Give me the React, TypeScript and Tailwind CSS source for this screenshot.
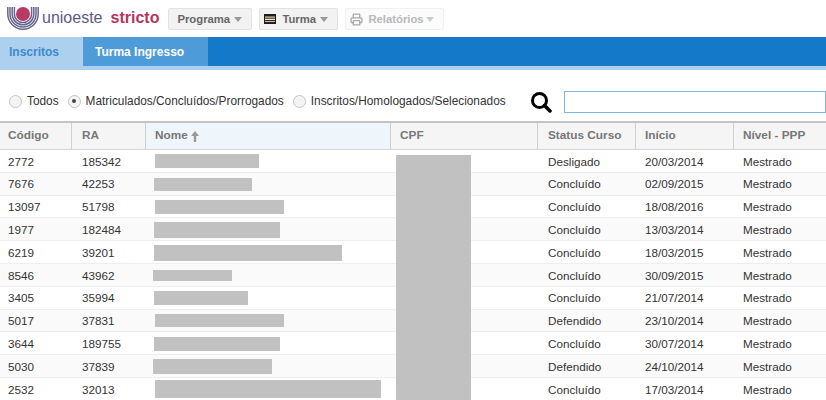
import React from 'react';
import { Printer } from 'lucide-react';

type Row = { codigo: string; ra: string; bar: string; status: string; inicio: string };

const rows: Row[] = [
  { codigo: '2772', ra: '185342', bar: 'ml-[10px] w-[104px] h-[14px]', status: 'Desligado', inicio: '20/03/2014' },
  { codigo: '7676', ra: '42253', bar: 'ml-[9px] w-[98px] h-[13px]', status: 'Concluído', inicio: '02/09/2015' },
  { codigo: '13097', ra: '51798', bar: 'ml-[10px] w-[129px] h-[14px]', status: 'Concluído', inicio: '18/08/2016' },
  { codigo: '1977', ra: '182484', bar: 'ml-[9px] w-[126px] h-[16px]', status: 'Concluído', inicio: '13/03/2014' },
  { codigo: '6219', ra: '39201', bar: 'ml-[9px] w-[188px] h-[16px]', status: 'Concluído', inicio: '18/03/2015' },
  { codigo: '8546', ra: '43962', bar: 'ml-[8px] w-[79px] h-[11px]', status: 'Concluído', inicio: '30/09/2015' },
  { codigo: '3405', ra: '35994', bar: 'ml-[9px] w-[94px] h-[14px]', status: 'Concluído', inicio: '21/07/2014' },
  { codigo: '5017', ra: '37831', bar: 'ml-[10px] w-[129px] h-[13px]', status: 'Defendido', inicio: '23/10/2014' },
  { codigo: '3644', ra: '189755', bar: 'ml-[9px] w-[126px] h-[14px]', status: 'Concluído', inicio: '30/07/2014' },
  { codigo: '5030', ra: '37839', bar: 'ml-[8px] w-[119px] h-[15px]', status: 'Defendido', inicio: '24/10/2014' },
  { codigo: '2532', ra: '32013', bar: 'ml-[10px] w-[226px] h-[18px]', status: 'Concluído', inicio: '17/03/2014' },
];

const cols = 'grid grid-cols-[72px_74px_245px_147px_98px_98px_92px]';

const Logo = () => (
  <svg width="32" height="24" viewBox="0 0 32 24" className="shrink-0">
    <g fill="none" stroke="#68658c" strokeWidth="1.5">
      <path d="M0.800 0V7A15.200 15.200 0 0 0 31.200 7V0" />
      <path d="M3 0V7A13 13 0 0 0 29 7V0" />
      <path d="M5.200 0V7A10.800 10.800 0 0 0 26.800 7V0" />
      <path d="M7.400 0V7A8.600 8.600 0 0 0 24.600 7V0" />
    </g>
    <circle cx="16" cy="7" r="7" fill="#b93a63" />
  </svg>
);

const MenuButton = ({ children, width, disabled }: { children: React.ReactNode; width: string; disabled?: boolean }) => (
  <div
    className={`flex h-[22px] items-center rounded-[2px] border text-[11.3px] font-bold ${width} ${
      disabled ? 'border-[#f0f0f0] bg-[#fbfbfb] text-[#b8b8b8]' : 'border-[#e2e2e2] bg-[#f2f2f2] text-[#666666]'
    }`}
  >
    {children}
    <span
      className={`ml-auto mr-[9px] h-0 w-0 border-x-[4px] border-t-[5px] border-x-transparent ${
        disabled ? 'border-t-[#cccccc]' : 'border-t-[#999999]'
      }`}
    />
  </div>
);

const TurmaIcon = () => (
  <svg width="12" height="10" viewBox="0 0 12 10" className="shrink-0">
    <rect width="12" height="10" fill="#1c1c1c" />
    <rect x="1" y="2.500" width="10" height="1.200" fill="#e9d9a0" />
    <rect x="1" y="4.700" width="10" height="1.200" fill="#ffffff" />
    <rect x="1" y="6.900" width="10" height="1.200" fill="#e8a9a0" />
  </svg>
);

const Radio = ({ label, checked }: { label: string; checked?: boolean }) => (
  <div className="flex items-center gap-[5px]">
    <span className="flex h-[13px] w-[13px] items-center justify-center rounded-full border border-[#c4c4c4] bg-[#f4f4f4]">
      {checked && <span className="h-[4px] w-[4px] rounded-full bg-[#444444]" />}
    </span>
    <span>{label}</span>
  </div>
);

const Head = ({ children, active }: { children: React.ReactNode; active?: boolean }) => (
  <div className={`flex items-center border-r border-[#cfcfcf] pl-[8px] last:border-r-0 ${active ? 'bg-[#eef5fb]' : ''}`}>
    {children}
  </div>
);

export default function App() {
  return (
    <div className="h-[400px] w-[826px] overflow-hidden bg-white font-['Liberation_Sans',Arial,sans-serif] text-[11.7px] text-[#333333]">
      <div className="flex h-[37px] items-start pl-[7px] pt-[8px]">
        <div className="-mt-[1px]">
          <Logo />
        </div>
        <span className="ml-[3px] text-[16px] leading-[20px] text-[#5c5a82]">unioeste</span>
        <span className="ml-[8px] text-[16px] font-bold leading-[20px] text-[#b3355f]">stricto</span>
        <div className="ml-[9px] flex gap-[7px]">
          <MenuButton width="w-[84px]">
            <span className="ml-[8px]">Programa</span>
          </MenuButton>
          <MenuButton width="w-[79px]">
            <span className="ml-[4px] mr-[6px] flex">
              <TurmaIcon />
            </span>
            Turma
          </MenuButton>
          <MenuButton width="w-[99px]" disabled>
            <Printer size={13} strokeWidth={2.5} className="ml-[4px] mr-[5px] text-[#aaaaaa]" />
            Relatórios
          </MenuButton>
        </div>
      </div>

      <div className="flex h-[29px] bg-[#1579c9] text-[12px] font-bold">
        <div className="flex w-[83px] items-center bg-[#acd0ed] pl-[9px] text-[#3b8ad2]">Inscritos</div>
        <div className="flex w-[125px] items-center bg-[#4e9bd9] pl-[12px] text-white">Turma Ingresso</div>
      </div>
      <div className="h-[4px] bg-[#acd0ed]" />

      <div className="flex h-[51px] items-center pl-[9px] pt-[12px]">
        <div className="flex w-[522px] gap-[9px] text-[11.85px]">
          <Radio label="Todos" />
          <Radio label="Matriculados/Concluídos/Prorrogados" checked />
          <Radio label="Inscritos/Homologados/Selecionados" />
        </div>
        <svg width="22" height="22" viewBox="0 0 22 22" className="-ml-[1px] mr-[1px] shrink-0">
          <circle cx="9.500" cy="9.500" r="7" fill="none" stroke="#000000" strokeWidth="3" />
          <path d="M14.500 14.500 20 20" stroke="#000000" strokeWidth="3.500" strokeLinecap="round" />
        </svg>
        <div className="ml-[11px] h-[22px] flex-1 border border-[#7fb5e6] bg-white" />
      </div>

      <div className="relative">
        <div className={`${cols} h-[29px] border-t-2 border-b border-t-[#c4c4c4] border-b-[#d6d6d6] bg-[#f5f5f5] text-[11.8px] font-bold text-[#777777]`}>
          <Head>Código</Head>
          <Head>
            <span className="ml-[2px]">RA</span>
          </Head>
          <Head active>
            <span className="ml-[1px]">Nome</span>
            <svg width="8" height="11" viewBox="0 0 8 11" className="ml-[3px]">
              <path d="M4 0 8 5H5.200V11H2.800V5H0Z" fill="#999999" />
            </svg>
          </Head>
          <Head>
            <span className="ml-[1px]">CPF</span>
          </Head>
          <Head>
            <span className="ml-[2px]">Status Curso</span>
          </Head>
          <Head>
            <span className="ml-[1px]">Início</span>
          </Head>
          <Head>
            <span className="ml-[1px]">Nível - PPP</span>
          </Head>
        </div>

        {rows.map((row, i) => (
          <div
            key={row.codigo}
            className={`${cols} h-[22.8px] items-center border-b border-[#eeeeee] pt-[1px] ${i % 2 === 1 ? 'bg-[#fafafa]' : 'bg-white'}`}
          >
            <div className="pl-[8px]">{row.codigo}</div>
            <div className="pl-[10px]">{row.ra}</div>
            <div className="-ml-[1px]">
              <div className={`bg-[#c1c1c1] ${row.bar}`} />
            </div>
            <div />
            <div className="pl-[10px]">{row.status}</div>
            <div className="pl-[9px]">{row.inicio}</div>
            <div className="pl-[9px]">Mestrado</div>
          </div>
        ))}

        <div className="absolute left-[396px] top-[34px] h-[300px] w-[75px] bg-[#c1c1c1]" />
      </div>
    </div>
  );
}
